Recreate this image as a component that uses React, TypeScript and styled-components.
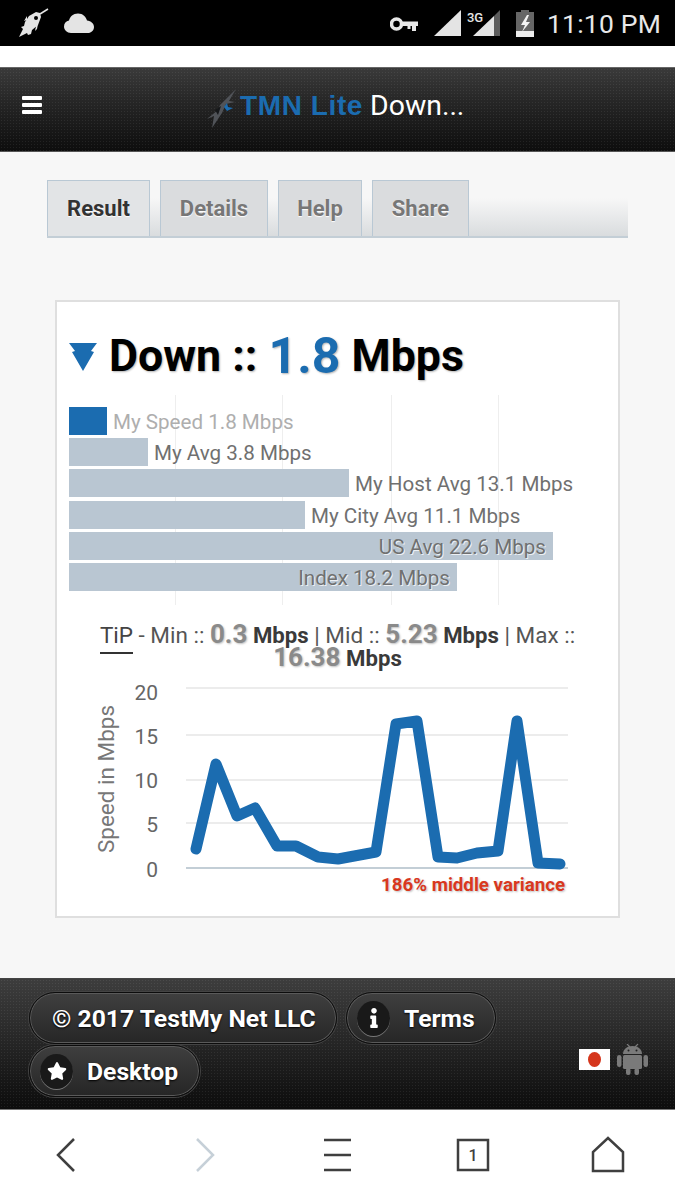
import React from "react";
import styled, { createGlobalStyle } from "styled-components";
import { FaInfo, FaStar } from "react-icons/fa";

const Global = createGlobalStyle`
  html, body { margin: 0; padding: 0; background: #fff; }
  body { font-family: Roboto, "Liberation Sans", sans-serif; width: 675px; height: 1200px; overflow: hidden; }
  * { box-sizing: border-box; }
`;

const Page = styled.div`
  width: 675px;
  height: 1200px;
  display: flex;
  flex-direction: column;
  background: #fff;
`;

const StatusBar = styled.div`
  height: 46px;
  background: #000;
  display: flex;
  align-items: flex-start;
  justify-content: space-between;
  flex: none;
`;
const StatusIcons = styled.svg`
  display: block;
  flex: none;
`;
const StatusRight = styled.div`
  display: flex;
  align-items: flex-start;
`;
const Clock = styled.div`
  width: 128px;
  font-size: 26.5px;
  line-height: 48px;
  color: #e8e8e8;
  letter-spacing: 0.2px;
  white-space: nowrap;
`;

const TopGap = styled.div`
  height: 21px;
  flex: none;
`;

const texture = `radial-gradient(rgba(255,255,255,.07) .6px, transparent .8px)`;

const Header = styled.header`
  height: 85px;
  flex: none;
  display: flex;
  align-items: center;
  padding-left: 22px;
  border-top: 1px solid #666;
  border-bottom: 1px solid #555;
  background: ${texture} 0 0 / 3px 3px, linear-gradient(#3a3a3a, #262626 40%, #0d0d0d);
`;
const MenuIcon = styled.svg`
  flex: none;
  display: block;
  margin-top: -10px;
`;
const Brand = styled.div`
  display: flex;
  align-items: center;
  margin-left: 162px;
  margin-top: -7px;
`;
const BrandBolt = styled.svg`
  display: block;
  flex: none;
  margin-top: 6px;
`;
const BrandText = styled.div`
  font-size: 28.4px;
  color: #fff;
  white-space: nowrap;
  line-height: 40px;
`;
const BrandBlue = styled.span`
  font-family: "Liberation Sans", Arial, sans-serif;
  font-size: 28px;
  font-weight: 700;
  letter-spacing: 0.6px;
  color: #1b6cb0;
`;

const Main = styled.main`
  height: 826px;
  flex: none;
  padding: 28px 47px 0;
  background: #f7f7f7;
`;

const TabStrip = styled.div`
  width: 581px;
  height: 58px;
  display: flex;
  gap: 10px;
  border-bottom: 2px solid #c3ced6;
  background: linear-gradient(rgba(215,218,220,0), #d9dcde) 0 100% / 100% 38px no-repeat;
`;
const Tab = styled.div<{ $w: number; $active?: boolean }>`
  width: ${(p) => p.$w}px;
  height: 56px;
  background: ${(p) => (p.$active ? "#e2e4e6" : "#dadcde")};
  border: 1px solid #b9c8d4;
  border-bottom: none;
  display: flex;
  align-items: center;
  justify-content: center;
  font-size: 22px;
  font-weight: 700;
  color: ${(p) => (p.$active ? "#333" : "#777")};
  text-shadow: 0 1px 1px #fff;
`;

const Card = styled.section`
  margin: 62px 0 0 8px;
  width: 565px;
  height: 618px;
  background: #fff;
  border: 2px solid #dfdfdf;
  padding: 26px 0 0 12px;
`;
const Title = styled.h1`
  margin: 0;
  height: 56px;
  display: flex;
  align-items: center;
  font-size: 44.7px;
  font-weight: 700;
  color: #000;
  white-space: pre;
  text-shadow: 1px 1px 2px rgba(0, 0, 0, 0.3);
`;
const TitleArrow = styled.svg`
  display: block;
  flex: none;
  margin-right: 12px;
  margin-top: 2px;
`;
const Accent = styled.span`
  font-size: 50px;
  font-weight: 700;
  color: #1b6cb0;
`;

const BarChart = styled.div`
  width: 535px;
  height: 210px;
  margin-top: 11px;
  padding-top: 12px;
  display: flex;
  flex-direction: column;
  gap: 3.2px;
  background-image:
    linear-gradient(#eeeeee, #eeeeee),
    linear-gradient(#eeeeee, #eeeeee),
    linear-gradient(#eeeeee, #eeeeee),
    linear-gradient(#eeeeee, #eeeeee);
  background-size: 1px 100%;
  background-repeat: no-repeat;
  background-position: 106px 0, 213px 0, 322px 0, 429px 0;
`;
const BarRow = styled.div`
  height: 28px;
  display: flex;
  align-items: center;
  gap: 6px;
`;
const Bar = styled.div<{ $blue?: boolean }>`
  height: 28px;
  flex: none;
  display: flex;
  align-items: center;
  justify-content: flex-end;
  padding-right: 7px;
  background: ${(p) => (p.$blue ? "#1b6cb0" : "#b9c6d2")};
`;
const BarLabel = styled.span<{ $tone?: "light" | "inside" }>`
  font-size: 20.6px;
  padding-top: 2px;
  white-space: nowrap;
  color: ${(p) => (p.$tone === "light" ? "#aeaeae" : "#707070")};
  text-shadow: ${(p) => (p.$tone === "inside" ? "1px 1px 0 rgba(255,255,255,.75)" : "none")};
`;

const Tip = styled.div`
  width: 537px;
  margin-top: 18px;
  text-align: center;
  font-size: 22.5px;
  line-height: 22px;
  color: #555;
`;
const TipWord = styled.span`
  border-bottom: 2px solid #333;
  padding-bottom: 4px;
  color: #444;
`;
const TipValue = styled.span`
  font-size: 26px;
  font-weight: 700;
  color: #8a8a8a;
  text-shadow: 1px 1px 2px rgba(0, 0, 0, 0.25);
`;
const TipUnit = styled.span`
  font-size: 22.2px;
  font-weight: 700;
  color: #3a3a3a;
`;
const LineChart = styled.svg`
  display: block;
  margin: 7px 0 0 -12px;
`;

const Footer = styled.footer`
  height: 132px;
  flex: none;
  padding: 14px 27px 12px 29px;
  display: flex;
  justify-content: space-between;
  align-items: flex-end;
  border-top: 1px solid #444;
  border-bottom: 1px solid #777;
  background: ${texture} 0 0 / 3px 3px, linear-gradient(#3d3d3d, #2a2a2a 40%, #0c0c0c);
`;
const Pills = styled.div`
  width: 480px;
  display: flex;
  flex-wrap: wrap;
  gap: 1px 9px;
`;
const Pill = styled.div<{ $w: number }>`
  width: ${(p) => p.$w}px;
  height: 52px;
  border-radius: 26px;
  display: flex;
  align-items: center;
  gap: 14px;
  padding-left: 10px;
  border: 1px solid #0c0c0c;
  box-shadow: inset 0 0 0 1px #5a5a5a, 0 0 0 1px #444;
  background: linear-gradient(#3f3f3f, #262626);
  font-size: 24.7px;
  font-weight: 700;
  color: #fff;
  text-shadow: 0 1px 2px #000;
  white-space: nowrap;
`;
const PillText = styled.span`
  padding-left: 12px;
`;
const PillIcon = styled.span`
  width: 33px;
  height: 35px;
  flex: none;
  border-radius: 50%;
  background: #191919;
  box-shadow: 0 1px 0 #777;
  display: flex;
  align-items: center;
  justify-content: center;
  color: #fff;
  font-size: 20px;
`;
const Badges = styled.div`
  display: flex;
  align-items: center;
  gap: 7px;
  padding-bottom: 22px;
`;
const Flag = styled.div`
  width: 31px;
  height: 21px;
  background: #fff;
  display: flex;
  align-items: center;
  justify-content: center;
`;
const FlagDot = styled.div`
  width: 13px;
  height: 15px;
  border-radius: 50%;
  background: #d5361c;
`;
const AndroidIcon = styled.svg`
  display: block;
  flex: none;
`;

const BottomNav = styled.nav`
  flex: 1;
  background: #fff;
`;
const NavIcons = styled.svg`
  display: block;
`;

const points =
  "196,848 216,763 237,815 255,807 277,845 296,845 318,856 338,858 376,851 396,723 417,720 438,856 457,857 477,852 498,850 517,720 538,862 560,863";

const bars = [
  { w: 38, label: "My Speed 1.8 Mbps", blue: true, tone: "light" as const },
  { w: 79, label: "My Avg 3.8 Mbps" },
  { w: 280, label: "My Host Avg 13.1 Mbps" },
  { w: 236, label: "My City Avg 11.1 Mbps" },
  { w: 484, label: "US Avg 22.6 Mbps", inside: true },
  { w: 388, label: "Index 18.2 Mbps", inside: true },
];

const Tick = styled.text`
  font-family: Roboto, sans-serif;
  font-size: 21px;
  fill: #666;
`;
const AxisTitle = styled.text`
  font-family: Roboto, sans-serif;
  font-size: 22.5px;
  fill: #777;
`;
const Note = styled.text`
  font-family: Roboto, sans-serif;
  font-size: 18.7px;
  font-weight: 700;
  fill: #d9381e;
  text-shadow: 1px 1px 2px rgba(0, 0, 0, 0.25);
`;

export default function App() {
  return (
    <Page>
      <Global />
      <StatusBar>
        <StatusIcons width="110" height="46" viewBox="0 0 110 46">
          <g fill="#e4e4e4">
            <path d="M19 37l4-8-2-2 3-1 1-4 4-6 7-4 4 1 1 4-3 8-6 5-1 4-3 1-1-2-8 4z" />
            <path d="M40 14l8-5" stroke="#e4e4e4" strokeWidth="1.5" fill="none" />
            <path d="M27 16l-3 5 3-1zM36 26l-1 5 2-2 1-5z" />
            <circle cx="36" cy="18" r="2" fill="#000" />
            <path d="M71 33c-4 0-7-3-7-6.5 0-3 2-5.500 5-6 1-4 4-7 9-7 5 0 8 3.500 9 7 4 .5 7 3 7 6.500 0 3.500-3 6-6 6z" />
          </g>
        </StatusIcons>
        <StatusRight>
          <StatusIcons width="157" height="46" viewBox="390 0 157 46">
            <circle cx="396.500" cy="24" r="5" fill="none" stroke="#e8e8e8" strokeWidth="3.500" />
            <path d="M402 21.500h16v4.500h-2v5h-4v-5h-1.500v3h-3v-3H402z" fill="#e8e8e8" />
            <path d="M434 36h27V10z" fill="#e4e4e4" />
            <path d="M473 36h21V16l-21 20z" fill="#e4e4e4" />
            <path d="M494 16l6-6v26h-6z" fill="#5c5c5c" />
            <text x="467" y="22" fontFamily="Roboto, sans-serif" fontSize="13" fontWeight="500" fill="#e4e4e4" textLength="16">3G</text>
            <path d="M521 10h8v2h5v25h-18V12h5z" fill="#666" />
            <path d="M516 31h18v6h-18z" fill="#ececec" />
            <path d="M527 15l-6 10h4l-3 7 8-10h-4l3-7z" fill="#f4f4f4" />
          </StatusIcons>
          <Clock>11:10 PM</Clock>
        </StatusRight>
      </StatusBar>
      <TopGap />
      <Header>
        <MenuIcon width="20" height="18" viewBox="0 0 20 18">
          <g fill="#fff">
            <rect y="0" width="20" height="4" rx="1" />
            <rect y="7" width="20" height="4" rx="1" />
            <rect y="14" width="20" height="4" rx="1" />
          </g>
        </MenuIcon>
        <Brand>
          <BrandBolt width="36" height="42" viewBox="0 0 36 42">
            <path d="M32 1L16 17l-2 5-11 9 7-3-2 12 10-15 4-9 9-2-6-1z" fill="#505358" />
            <path d="M20 19l3-4 1 4 5 1-6 3z" fill="#1b6cb0" />
            <path d="M11 22l6-4-3 9z" fill="#16181a" />
          </BrandBolt>
          <BrandText>
            <BrandBlue>TMN Lite</BrandBlue> Down...
          </BrandText>
        </Brand>
      </Header>
      <Main>
        <TabStrip>
          <Tab $w={103} $active>Result</Tab>
          <Tab $w={108}>Details</Tab>
          <Tab $w={84}>Help</Tab>
          <Tab $w={97}>Share</Tab>
        </TabStrip>
        <Card>
          <Title>
            <TitleArrow width="28" height="28" viewBox="0 0 28 28">
              <path d="M0 0h28l-6 8 3 1L14 28 3 9l3-1z" fill="#1b6cb0" />
            </TitleArrow>
            Down :: <Accent>1.8</Accent> Mbps
          </Title>
          <BarChart>
            {bars.map((b) => (
              <BarRow key={b.label}>
                <Bar $blue={b.blue} style={{ width: b.w }}>
                  {b.inside && <BarLabel $tone="inside">{b.label}</BarLabel>}
                </Bar>
                {!b.inside && <BarLabel $tone={b.tone}>{b.label}</BarLabel>}
              </BarRow>
            ))}
          </BarChart>
          <Tip>
            <TipWord>TiP</TipWord> - Min :: <TipValue>0.3</TipValue> <TipUnit>Mbps</TipUnit> | Mid :: <TipValue>5.23</TipValue>{" "}
            <TipUnit>Mbps</TipUnit> | Max :: <TipValue>16.38</TipValue> <TipUnit>Mbps</TipUnit>
          </Tip>
          <LineChart width="561" height="226" viewBox="57 675 561 226">
            {[687, 734, 779, 822].map((y) => (
              <line key={y} x1="186" x2="568" y1={y} y2={y} stroke="#e6e6e6" strokeWidth="1.500" />
            ))}
            <line x1="186" x2="568" y1="867" y2="867" stroke="#c3ced6" strokeWidth="2" />
            {[["20", 699], ["15", 743], ["10", 787], ["5", 831], ["0", 876]].map(([t, y]) => (
              <Tick key={t} x="158" y={y} textAnchor="end">{t}</Tick>
            ))}
            <AxisTitle x="0" y="0" transform="translate(114 778) rotate(-90)" textAnchor="middle">Speed in Mbps</AxisTitle>
            <polyline points={points} fill="none" stroke="#1b6cb0" strokeWidth="11" strokeLinejoin="round" strokeLinecap="round" />
            <Note x="565" y="890" textAnchor="end">186% middle variance</Note>
          </LineChart>
        </Card>
      </Main>
      <Footer>
        <Pills>
          <Pill $w={308}><PillText>© 2017 TestMy Net LLC</PillText></Pill>
          <Pill $w={150}>
            <PillIcon><FaInfo /></PillIcon>
            Terms
          </Pill>
          <Pill $w={171}>
            <PillIcon><FaStar /></PillIcon>
            Desktop
          </Pill>
        </Pills>
        <Badges>
          <Flag><FlagDot /></Flag>
          <AndroidIcon width="31" height="31" viewBox="0 0 31 31">
            <g fill="#7a7a7a">
              <path d="M6 10c0-4.500 4-8 9.500-8S25 5.500 25 10z" />
              <path d="M10 0l3 3M21 0l-3 3" stroke="#7a7a7a" strokeWidth="1.200" />
              <rect x="6" y="11" width="19" height="14" rx="1.500" />
              <rect x="0" y="11" width="4.500" height="12" rx="2.200" />
              <rect x="26.500" y="11" width="4.500" height="12" rx="2.200" />
              <rect x="9" y="24" width="4.500" height="7" rx="2" />
              <rect x="17.500" y="24" width="4.500" height="7" rx="2" />
            </g>
            <circle cx="11.500" cy="6.500" r="1" fill="#222" />
            <circle cx="19.500" cy="6.500" r="1" fill="#222" />
          </AndroidIcon>
        </Badges>
      </Footer>
      <BottomNav>
        <NavIcons width="675" height="90" viewBox="0 1110 675 90">
          <path d="M74 1139L58 1155l16 16" fill="none" stroke="#3f3f3f" strokeWidth="2.500" />
          <path d="M197 1139l16 16-16 16" fill="none" stroke="#c6d0d8" strokeWidth="2.500" />
          <path d="M324 1140h27M324 1155h27M324 1170h27" stroke="#3f3f3f" strokeWidth="2.500" />
          <rect x="458" y="1140" width="30" height="30" fill="none" stroke="#3f3f3f" strokeWidth="2.500" />
          <text x="473" y="1161" textAnchor="middle" fontFamily="Roboto, sans-serif" fontSize="16" fontWeight="500" fill="#3f3f3f">1</text>
          <path d="M593 1171v-19l15-14 15 14v19z" fill="none" stroke="#3f3f3f" strokeWidth="2.500" />
        </NavIcons>
      </BottomNav>
    </Page>
  );
}
